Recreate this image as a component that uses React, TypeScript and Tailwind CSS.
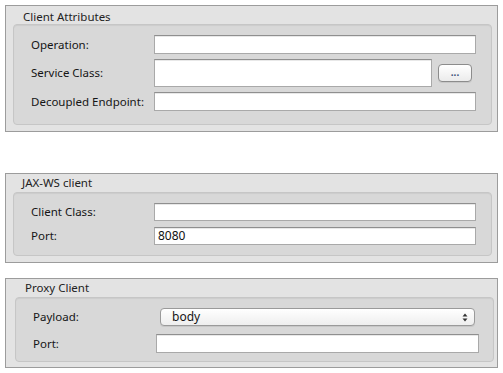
import * as React from "react"

const font = { fontFamily: '"Lucida Grande", "Noto Sans", "DejaVu Sans", sans-serif' }

function TextBox({ value, className = "" }: { value?: string; className?: string }) {
  return (
    <div
      className={
        "flex items-center border border-[#a9a9a9] border-t-[#8f8f8f] bg-white pl-[3px] text-[12px] text-[#111] shadow-[inset_0_1px_0_#e8e8e8] " +
        className
      }
    >
      {value}
    </div>
  )
}

function Group({
  title,
  className = "",
  innerClass = "",
  children,
}: {
  title: string
  className?: string
  innerClass?: string
  children: React.ReactNode
}) {
  return (
    <div className={"mx-[5px] w-[493px] border border-[#9c9c9c] bg-[#e3e3e3] " + className}>
      <div className="h-[18px] pt-[4px] text-[11.5px] leading-[14px] text-[#222]">{title}</div>
      <div
        className={
          "rounded-[4px] border border-[#c6c6c6] bg-[#d8d8d8] shadow-[inset_0_1px_1px_rgba(0,0,0,0.06)] " +
          innerClass
        }
      >
        {children}
      </div>
    </div>
  )
}

export default function App() {
  return (
    <div className="h-[373px] w-[503px] bg-white pt-[5px]" style={font}>
      <Group title="Client Attributes" className="h-[127px] [&>div:first-child]:pl-[17px]" innerClass="mr-[5px] ml-[7px] h-[101px] pl-[17px] pt-[10px]">
        <div className="grid grid-cols-[123px_322px] gap-y-[5px] text-[11.5px] text-[#151515]">
          <div className="flex h-[19px] items-center">Operation:</div>
          <TextBox className="h-[19px]" />
          <div className="flex h-[28px] items-center">Service Class:</div>
          <div className="flex items-center gap-[6px]">
            <TextBox className="h-[28px] w-[278px]" />
            <button className="flex h-[18px] w-[34px] items-center justify-center rounded-[4px] border border-[#8c8c8c] bg-gradient-to-b from-white to-[#ebebeb] pb-[3px] text-[10px] font-bold leading-none text-[#3b4f7a] shadow-[0_1px_0_rgba(0,0,0,0.08)]">
              ...
            </button>
          </div>
          <div className="flex h-[19px] items-center">Decoupled Endpoint:</div>
          <TextBox className="h-[19px]" />
        </div>
      </Group>

      <Group title="JAX-WS client" className="mt-[41px] h-[90px] [&>div:first-child]:pl-[16px] [&>div:first-child]:pt-[2px]" innerClass="mr-[5px] ml-[7px] h-[64px] pl-[17px] pt-[10px]">
        <div className="grid grid-cols-[123px_322px] gap-y-[6px] text-[11.5px] text-[#151515]">
          <div className="flex h-[18px] items-center">Client Class:</div>
          <TextBox className="h-[18px]" />
          <div className="flex h-[18px] items-center">Port:</div>
          <TextBox className="h-[18px]" value="8080" />
        </div>
      </Group>

      <Group title="Proxy Client" className="mt-[15px] h-[90px] [&>div:first-child]:pl-[19px] [&>div:first-child]:pt-[2px]" innerClass="mr-[3px] ml-[9px] h-[65px] pl-[17px] pt-[10px]">
        <div className="grid grid-cols-[123px_322px] gap-y-[8px] text-[11.5px] text-[#151515]">
          <div className="flex h-[18px] items-center">Payload:</div>
          <div className="ml-[4px] flex h-[18px] w-[315px] items-center justify-between rounded-[4px] border border-[#9a9a9a] bg-gradient-to-b from-white to-[#eeeeee] pl-[11px] pr-[6px] text-[12px] shadow-[0_1px_0_rgba(0,0,0,0.08)]">
            <span>body</span>
            <svg width="6" height="9" viewBox="0 0 6 9">
              <path d="M3 0.5 L5.5 3.5 H0.5 Z" fill="#333" />
              <path d="M3 8.5 L5.5 5.5 H0.5 Z" fill="#333" />
            </svg>
          </div>
          <div className="flex h-[19px] items-center">Port:</div>
          <TextBox className="h-[19px] w-[323px]" />
        </div>
      </Group>
    </div>
  )
}
